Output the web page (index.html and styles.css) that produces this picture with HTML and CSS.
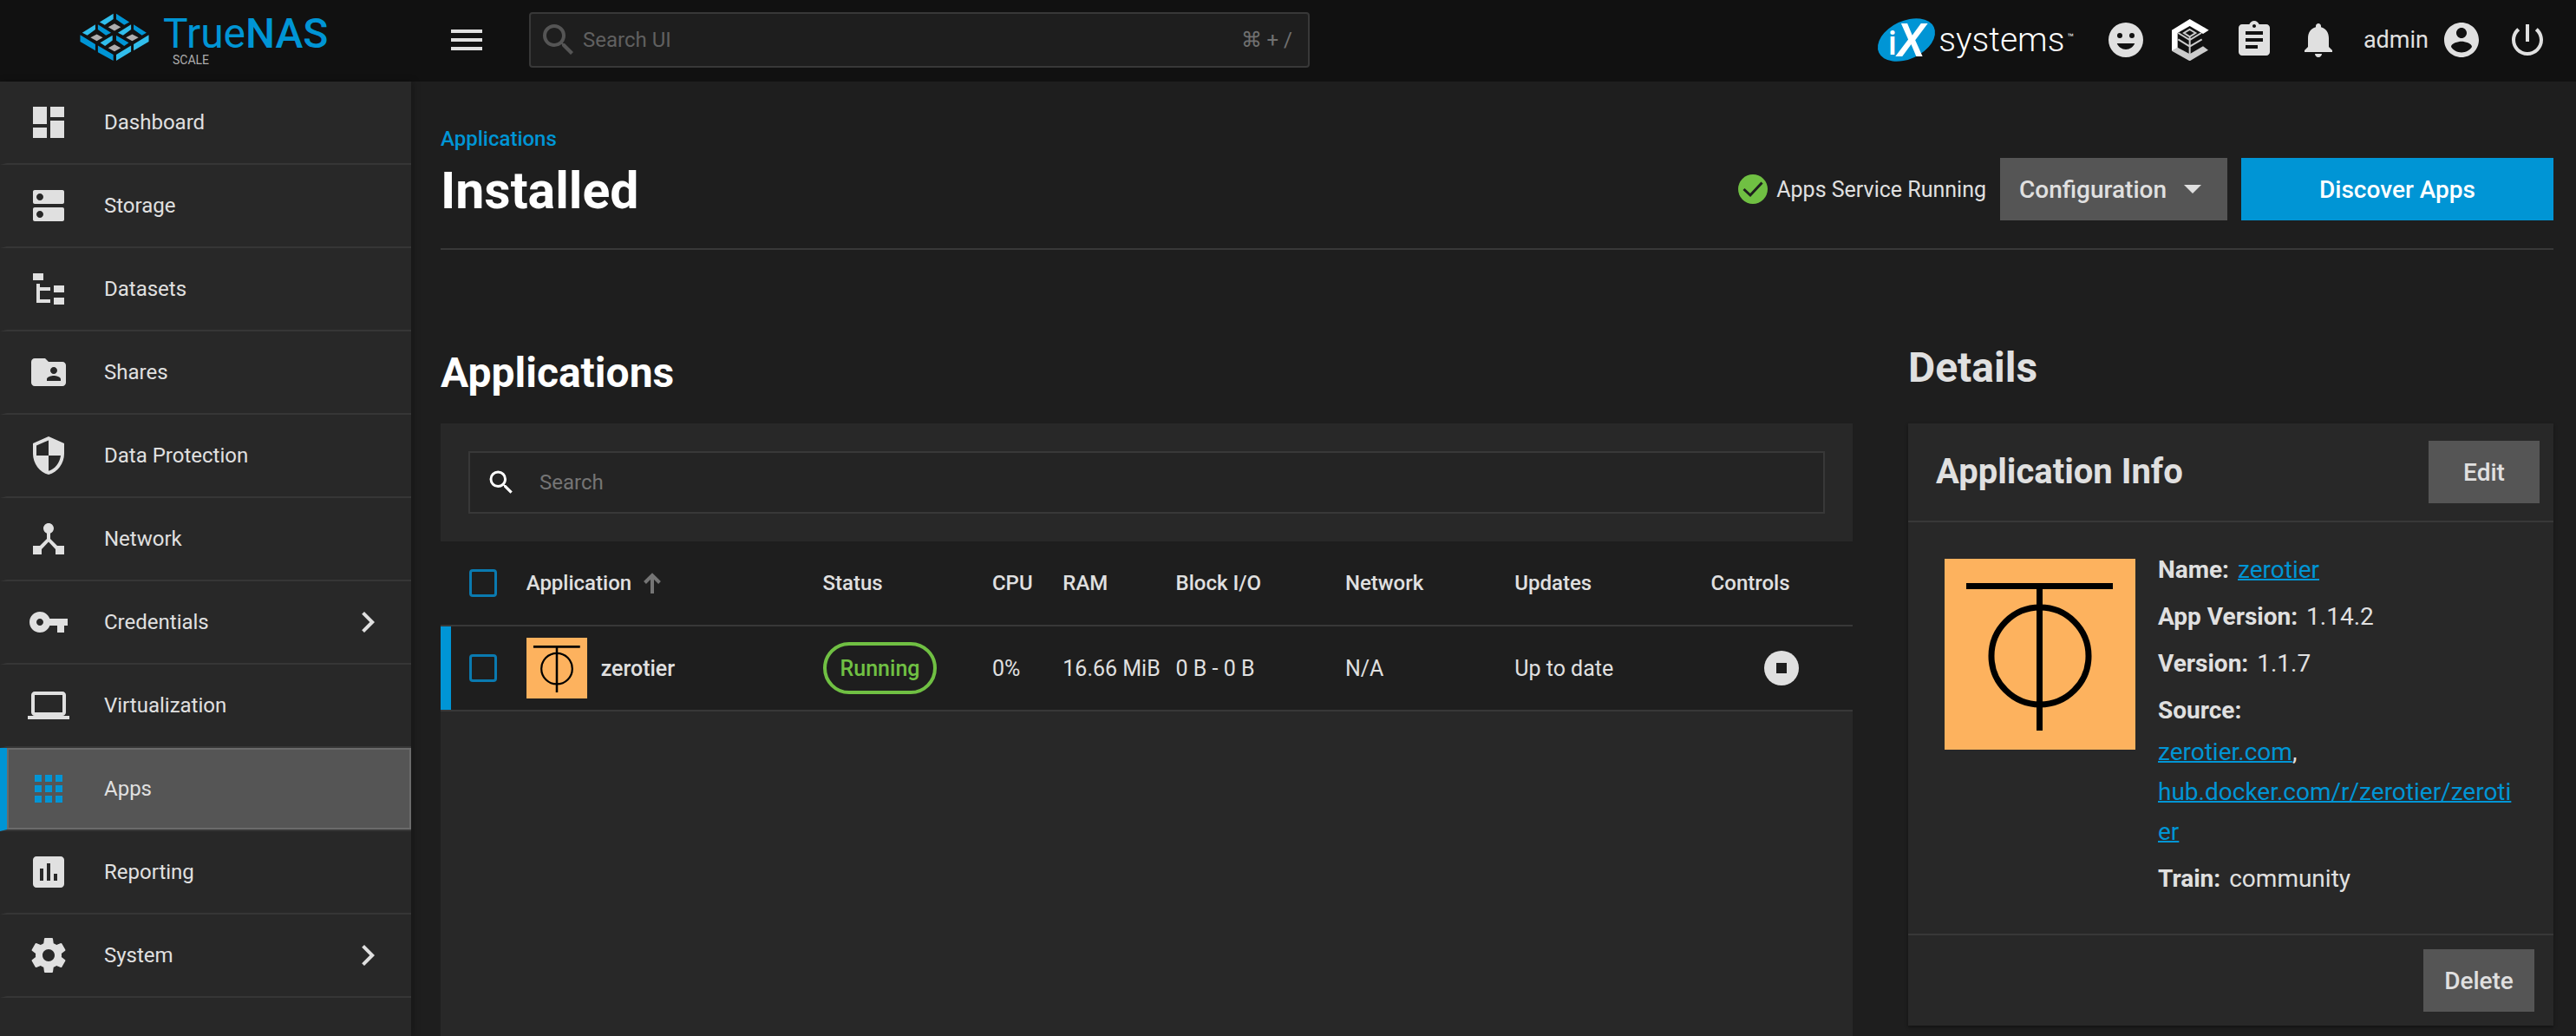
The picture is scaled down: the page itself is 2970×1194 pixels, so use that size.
FILE: index.html
```html
<!DOCTYPE html>
<html lang="en">
<head>
<meta charset="utf-8">
<title>Installed - TrueNAS</title>
<link rel="stylesheet" href="styles.css">
</head>
<body>
<header class="topbar">
  <a class="brand" href="#">
    <svg class="brand-mark" viewBox="36 28 240 170" aria-hidden="true">
      <g fill="#31beec">
        <path d="M104 60L152 30V49L122 70ZM43 97L89 68V86L61 106ZM168 97L214 68V86L186 106ZM106 132L149 106V124L123 143ZM162 174L214 142V163L162 195ZM223 137L276 105V128L223 159Z"/>
      </g>
      <g fill="#0095d5">
        <path d="M162 30L208 60L190 70L162 50ZM98 68L144 97L126 106L98 86ZM223 68L268 97L252 106L223 86ZM162 106L206 132L190 143L162 124ZM36 105L89 137V159L36 128ZM98 142L152 174V195L98 165Z"/>
      </g>
      <g fill="#aeadae">
        <path d="M156 65L178 77L156 90L134 77ZM94 102L115 114L94 126L72 114ZM218 102L240 114L218 126L196 114ZM156 138L178 150L156 162L134 150Z"/>
      </g>
    </svg>
    <span class="brand-text">
      <span class="brand-name">True<b>NAS</b></span>
      <span class="brand-edition">SCALE</span>
    </span>
  </a>
  <div class="topbar-main">
    <button class="icon-btn" type="button" aria-label="Toggle menu">
      <svg class="icon" viewBox="0 0 24 24"><path d="M3 18h18v-2H3v2zm0-5h18v-2H3v2zm0-7v2h18V6H3z"/></svg>
    </button>
    <label class="global-search">
      <svg class="icon" viewBox="0 0 24 24"><path d="M9.5 3A6.5 6.5 0 0 1 16 9.5c0 1.61-.59 3.09-1.56 4.23l.27.27h.79l5 5-1.5 1.5-5-5v-.79l-.27-.27A6.516 6.516 0 0 1 9.5 16 6.5 6.5 0 0 1 3 9.5 6.5 6.5 0 0 1 9.5 3m0 2C7 5 5 7 5 9.5S7 14 9.5 14 14 12 14 9.5 12 5 9.5 5z"/></svg>
      <input type="text" placeholder="Search UI" aria-label="Search UI">
      <kbd>⌘ + /</kbd>
    </label>
    <div class="topbar-actions">
      <a class="vendor" href="#">
        <svg class="vendor-mark" viewBox="0 0 68 50">
          <ellipse cx="34" cy="25" rx="35" ry="22" transform="rotate(-25 34 25)"/>
          <text class="vendor-i" x="13" y="42">i</text>
          <text class="vendor-x" x="23" y="44">X</text>
        </svg>
        <span class="vendor-name">systems</span><span class="vendor-tm">™</span>
      </a>
      <button class="icon-btn" type="button" aria-label="Send feedback">
        <svg class="icon" viewBox="0 0 24 24"><path d="M12 2a10 10 0 1 0 0 20 10 10 0 0 0 0-20zM8.500 8a1.500 1.500 0 1 1 0 3 1.500 1.500 0 0 1 0-3zm7 0a1.500 1.500 0 1 1 0 3 1.500 1.500 0 0 1 0-3zM12 17.500c-2.330 0-4.310-1.460-5.110-3.500h10.220c-.8 2.040-2.780 3.500-5.110 3.500z"/></svg>
      </button>
      <button class="icon-btn" type="button" aria-label="TrueCommand status">
        <svg class="icon" viewBox="1049 50 144 144">
          <path fill="#fff" d="M1058 88L1120 50L1186 88L1166 101L1120 74L1078 98V150L1058 160Z"/>
          <path fill="#ccc" d="M1058 160L1078 148L1120 171L1166 144L1184 157L1120 195Z"/>
          <path fill="none" stroke="#ccc" stroke-width="6" d="M1080 98L1120 122L1160 98M1120 86L1140 98L1120 111L1100 98ZM1080 120L1120 145L1162 120M1120 112V172"/>
        </svg>
      </button>
      <button class="icon-btn" type="button" aria-label="Jobs">
        <svg class="icon" viewBox="0 0 24 24"><path d="M19 3h-4.180C14.400 1.840 13.300 1 12 1c-1.300 0-2.400.84-2.820 2H5c-1.100 0-2 .9-2 2v14c0 1.100.9 2 2 2h14c1.100 0 2-.9 2-2V5c0-1.100-.9-2-2-2zm-7 0c.55 0 1 .45 1 1s-.45 1-1 1-1-.45-1-1 .45-1 1-1zm2 14H7v-2h7v2zm3-4H7v-2h10v2zm0-4H7V7h10v2z"/></svg>
      </button>
      <button class="icon-btn" type="button" aria-label="Alerts">
        <svg class="icon" viewBox="0 0 24 24"><path d="M12 22c1.100 0 2-.9 2-2h-4c0 1.100.89 2 2 2zm6-6v-5c0-3.070-1.640-5.640-4.500-6.320V4c0-.83-.67-1.500-1.500-1.500s-1.500.67-1.500 1.500v.68C7.630 5.360 6 7.920 6 11v5l-2 2v1h16v-1l-2-2z"/></svg>
      </button>
      <button class="user-btn" type="button">
        <span>admin</span>
        <svg class="icon" viewBox="0 0 24 24"><path d="M12 2C6.480 2 2 6.480 2 12s4.480 10 10 10 10-4.480 10-10S17.520 2 12 2zm0 3c1.660 0 3 1.340 3 3s-1.340 3-3 3-3-1.340-3-3 1.340-3 3-3zm0 14.200c-2.500 0-4.710-1.280-6-3.220.03-1.990 4-3.080 6-3.080 1.990 0 5.970 1.090 6 3.080-1.290 1.940-3.500 3.220-6 3.220z"/></svg>
      </button>
      <button class="icon-btn" type="button" aria-label="Power">
        <svg class="icon" viewBox="0 0 24 24"><path d="M13 3h-2v10h2V3zm4.830 2.170l-1.420 1.420C17.990 7.860 19 9.810 19 12c0 3.870-3.130 7-7 7s-7-3.130-7-7c0-2.190 1.010-4.140 2.580-5.420L6.170 5.170C4.230 6.820 3 9.260 3 12c0 4.970 4.030 9 9 9s9-4.030 9-9c0-2.740-1.230-5.180-3.170-6.830z"/></svg>
      </button>
    </div>
  </div>
</header>

<div class="layout">
  <nav class="sidebar" aria-label="Main">
    <ul>
      <li><a href="#"><svg class="icon" viewBox="0 0 24 24"><path d="M13 3v6h8V3m-8 18h8V11h-8M3 21h8v-6H3m0-2h8V3H3z"/></svg><span>Dashboard</span></a></li>
      <li><a href="#"><svg class="icon" viewBox="0 0 24 24"><path d="M20 13H4c-.55 0-1 .45-1 1v6c0 .55.45 1 1 1h16c.55 0 1-.45 1-1v-6c0-.55-.45-1-1-1zM7 19c-1.100 0-2-.9-2-2s.9-2 2-2 2 .9 2 2-.9 2-2 2zM20 3H4c-.55 0-1 .45-1 1v6c0 .55.45 1 1 1h16c.55 0 1-.45 1-1V4c0-.55-.45-1-1-1zM7 9c-1.100 0-2-.9-2-2s.9-2 2-2 2 .9 2 2-.9 2-2 2z"/></svg><span>Storage</span></a></li>
      <li><a href="#"><svg class="icon" viewBox="0 0 24 24"><path d="M3 3h6v4H3V3m12 7h6v4h-6v-4m0 7h6v4h-6v-4m-2-4H7v5h6v2H5V9h2v2h6v2z"/></svg><span>Datasets</span></a></li>
      <li><a href="#"><svg class="icon" viewBox="0 0 24 24"><path d="M20 6h-8l-2-2H4c-1.100 0-1.990.9-1.990 2L2 18c0 1.100.9 2 2 2h16c1.100 0 2-.9 2-2V8c0-1.100-.9-2-2-2zm-5 3c1.100 0 2 .9 2 2s-.9 2-2 2-2-.9-2-2 .9-2 2-2zm4 8h-8v-1c0-1.330 2.670-2 4-2s4 .67 4 2v1z"/></svg><span>Shares</span></a></li>
      <li><a href="#"><svg class="icon" viewBox="0 0 24 24"><path d="M12 1L3 5v6c0 5.550 3.840 10.740 9 12 5.160-1.260 9-6.450 9-12V5l-9-4zm0 10.990h7c-.53 4.120-3.280 7.790-7 8.940V12H5V6.300l7-3.110v8.800z"/></svg><span>Data Protection</span></a></li>
      <li><a href="#"><svg class="icon" viewBox="0 0 24 24"><path d="M17 16l-4-4V8.820C14.160 8.400 15 7.300 15 6c0-1.660-1.340-3-3-3S9 4.340 9 6c0 1.300.84 2.400 2 2.820V12l-4 4H3v5h5v-3.050l4-4.200 4 4.200V21h5v-5h-4z"/></svg><span>Network</span></a></li>
      <li><a href="#"><svg class="icon" viewBox="0 0 24 24"><path d="M12.650 10C11.830 7.670 9.610 6 7 6c-3.310 0-6 2.690-6 6s2.690 6 6 6c2.610 0 4.830-1.670 5.650-4H17v4h4v-4h2v-4H12.650zM7 14c-1.100 0-2-.9-2-2s.9-2 2-2 2 .9 2 2-.9 2-2 2z"/></svg><span>Credentials</span><svg class="icon chevron" viewBox="0 0 24 24"><path d="M10 6L8.590 7.410 13.170 12l-4.580 4.590L10 18l6-6z"/></svg></a></li>
      <li><a href="#"><svg class="icon" viewBox="0 0 24 24"><path d="M20 18c1.100 0 1.990-.9 1.990-2L22 6c0-1.100-.9-2-2-2H4c-1.100 0-2 .9-2 2v10c0 1.100.9 2 2 2H0v2h24v-2h-4zM4 6h16v10H4V6z"/></svg><span>Virtualization</span></a></li>
      <li class="active"><a href="#" aria-current="page"><svg class="icon" viewBox="0 0 24 24"><path d="M4 8h4V4H4v4zm6 12h4v-4h-4v4zm-6 0h4v-4H4v4zm0-6h4v-4H4v4zm6 0h4v-4h-4v4zm6-10v4h4V4h-4zm-6 4h4V4h-4v4zm6 6h4v-4h-4v4zm0 6h4v-4h-4v4z"/></svg><span>Apps</span></a></li>
      <li><a href="#"><svg class="icon" viewBox="0 0 24 24"><path d="M19 3H5c-1.100 0-2 .9-2 2v14c0 1.100.9 2 2 2h14c1.100 0 2-.9 2-2V5c0-1.100-.9-2-2-2zM9 17H7v-7h2v7zm4 0h-2V7h2v10zm4 0h-2v-4h2v4z"/></svg><span>Reporting</span></a></li>
      <li><a href="#"><svg class="icon" viewBox="0 0 24 24"><path d="M19.430 12.980c.04-.32.07-.64.07-.98s-.03-.66-.07-.98l2.110-1.650c.19-.15.24-.42.12-.64l-2-3.460c-.12-.22-.39-.3-.61-.22l-2.490 1c-.52-.4-1.080-.73-1.690-.98l-.38-2.650C14.460 2.180 14.250 2 14 2h-4c-.25 0-.46.18-.49.42l-.38 2.650c-.61.25-1.170.59-1.690.98l-2.490-1c-.23-.09-.49 0-.61.22l-2 3.460c-.13.22-.07.49.12.64l2.110 1.650c-.04.32-.07.65-.07.98s.03.66.07.98l-2.110 1.650c-.19.15-.24.42-.12.64l2 3.460c.12.22.39.3.61.22l2.490-1c.52.4 1.080.73 1.690.98l.38 2.650c.03.24.24.42.49.42h4c.25 0 .46-.18.49-.42l.38-2.650c.61-.25 1.170-.59 1.690-.98l2.490 1c.23.09.49 0 .61-.22l2-3.460c.12-.22.07-.49-.12-.64l-2.110-1.650zM12 15.500c-1.930 0-3.500-1.570-3.500-3.500s1.570-3.500 3.500-3.500 3.500 1.570 3.500 3.500-1.570 3.500-3.500 3.500z"/></svg><span>System</span><svg class="icon chevron" viewBox="0 0 24 24"><path d="M10 6L8.590 7.410 13.170 12l-4.580 4.590L10 18l6-6z"/></svg></a></li>
    </ul>
  </nav>

  <main class="content">
    <div class="page-header">
      <div class="page-title">
        <a class="breadcrumb" href="#">Applications</a>
        <h1>Installed</h1>
      </div>
      <div class="page-actions">
        <div class="service-status">
          <svg class="status-icon" viewBox="0 0 34 34"><circle cx="17" cy="17" r="17" fill="#70c043"/><path d="M6.500 17L14 24L27.500 9.500" fill="none" stroke="#1e1e1e" stroke-width="3"/></svg>
          <span>Apps Service Running</span>
        </div>
        <button class="btn btn-config" type="button">Configuration
          <svg class="caret" viewBox="0 0 20 10"><path d="M0 0h20L10 10z"/></svg>
        </button>
        <button class="btn btn-primary" type="button">Discover Apps</button>
      </div>
    </div>

    <div class="columns">
      <section class="apps">
        <h2>Applications</h2>
        <div class="card apps-card">
          <div class="search-row">
            <label class="app-search">
              <svg class="icon" viewBox="0 0 24 24"><path d="M9.500 3A6.500 6.500 0 0 1 16 9.500c0 1.610-.59 3.090-1.560 4.230l.27.27h.79l5 5-1.500 1.500-5-5v-.79l-.27-.27A6.516 6.516 0 0 1 9.500 16 6.500 6.500 0 0 1 3 9.500 6.500 6.500 0 0 1 9.500 3m0 2C7 5 5 7 5 9.500S7 14 9.500 14 14 12 14 9.500 12 5 9.500 5z"/></svg>
              <input type="text" placeholder="Search" aria-label="Search applications">
            </label>
          </div>
          <table class="app-table">
            <colgroup>
              <col class="col-check"><col class="col-app"><col class="col-wide"><col class="col-cpu"><col class="col-ram">
              <col class="col-wide"><col class="col-wide"><col class="col-wide"><col class="col-wide">
            </colgroup>
            <thead>
              <tr>
                <th class="cell-check"><input type="checkbox" aria-label="Select all"></th>
                <th><span class="sort">Application <svg class="sort-icon" viewBox="0 0 20 24"><path d="M10 24V3M1.500 11.500L10 3L18.500 11.500" fill="none" stroke="#757575" stroke-width="4"/></svg></span></th>
                <th>Status</th>
                <th>CPU</th>
                <th>RAM</th>
                <th>Block I/O</th>
                <th>Network</th>
                <th>Updates</th>
                <th class="cell-controls">Controls</th>
              </tr>
            </thead>
            <tbody>
              <tr class="selected">
                <td class="cell-check"><input type="checkbox" aria-label="Select zerotier"></td>
                <td><span class="app-name">
                  <svg class="app-logo" viewBox="0 0 220 220"><rect width="220" height="220" fill="#fdb25e"/><path d="M25 28h169v9H25zM106 28h8v170h-8z"/><circle cx="110" cy="112" r="56" fill="none" stroke="#000" stroke-width="7"/></svg>
                  zerotier</span></td>
                <td><span class="pill">Running</span></td>
                <td>0%</td>
                <td>16.66 MiB</td>
                <td>0 B - 0 B</td>
                <td>N/A</td>
                <td>Up to date</td>
                <td class="cell-controls"><button class="stop-btn" type="button" aria-label="Stop"><svg viewBox="0 0 40 40"><circle cx="20" cy="20" r="20" fill="#e0e0e0"/><path d="M14 14h12v12H14z" fill="#1e1e1e"/></svg></button></td>
              </tr>
            </tbody>
          </table>
        </div>
      </section>

      <aside class="details">
        <h2>Details</h2>
        <div class="card details-card">
          <div class="card-header">
            <h3>Application Info</h3>
            <button class="btn btn-small" type="button">Edit</button>
          </div>
          <div class="card-body">
            <svg class="details-logo" viewBox="0 0 220 220"><rect width="220" height="220" fill="#fdb25e"/><path d="M25 28h169v7H25zM106 28h7v170h-7z"/><circle cx="110" cy="112" r="56" fill="none" stroke="#000" stroke-width="7"/></svg>
            <dl class="info">
              <div><dt>Name:</dt><dd><a href="#">zerotier</a></dd></div>
              <div><dt>App Version:</dt><dd>1.14.2</dd></div>
              <div><dt>Version:</dt><dd>1.1.7</dd></div>
              <div class="stacked"><dt>Source:</dt><dd><a href="#">zerotier.com</a>,</dd><dd><a href="#">hub.docker.com/r/zerotier/zerotier</a></dd></div>
              <div><dt>Train:</dt><dd>community</dd></div>
            </dl>
          </div>
          <div class="card-footer">
            <button class="btn btn-small" type="button">Delete</button>
          </div>
        </div>
      </aside>
    </div>
  </main>
</div>
</body>
</html>
```
FILE: styles.css
```css
:root {
  --bg: #1e1e1e;
  --card: #282828;
  --topbar: #111;
  --line: #383838;
  --fg: #e0e0e0;
  --muted: #757575;
  --primary: #0095d5;
  --green: #70c043;
  --btn: #555;
}

* { box-sizing: border-box; }

body {
  margin: 0;
  min-height: 100vh;
  display: flex;
  flex-direction: column;
  background: var(--bg);
  color: var(--fg);
  font-family: Roboto, "Liberation Sans", sans-serif;
  font-size: 24px;
}

h1, h2, h3, ul, dl, dd { margin: 0; padding: 0; }
ul { list-style: none; }
a { color: var(--primary); }
button, input, kbd { font: inherit; color: inherit; }
button { border: 0; padding: 0; background: none; cursor: pointer; }

.icon { width: 48px; height: 48px; flex: none; fill: currentColor; display: block; }

/* Top bar */
.topbar {
  display: grid;
  grid-template-columns: 474px minmax(0, 1fr);
  height: 94px;
  background: var(--topbar);
}
.brand {
  display: flex;
  gap: 16px;
  padding: 15px 0 0 92px;
  text-decoration: none;
}
.brand-mark { width: 80px; height: 56px; }
.brand-text { display: flex; flex-direction: column; }
.brand-name { font-size: 48px; line-height: 48px; }
.brand-name b { font-weight: 500; }
.brand-edition { padding-left: 11px; font-size: 14px; line-height: 12px; color: #aeadae; }

.topbar-main { display: flex; align-items: center; padding: 0 32px 2px 40px; }
.global-search {
  display: flex;
  align-items: center;
  width: 900px;
  height: 64px;
  margin-left: 48px;
  padding: 0 18px 0 8px;
  border: 2px solid var(--line);
  border-radius: 4px;
  background: var(--bg);
  color: #555;
}
.global-search input, .app-search input {
  flex: 1;
  min-width: 0;
  border: 0;
  padding: 0;
  background: none;
  outline: 0;
}
.global-search input { padding-left: 4px; }
.global-search input::placeholder { color: #606060; opacity: 1; }
.global-search kbd { color: #707070; }

.topbar-actions { display: flex; align-items: center; gap: 26px; margin-left: auto; }
.vendor { display: flex; align-items: center; gap: 3px; margin-right: 10px; color: #fff; text-decoration: none; }
.vendor-mark { width: 68px; height: 50px; fill: var(--primary); overflow: visible; }
.vendor-mark text { fill: #fff; font-weight: 500; }
.vendor-i { font-size: 38px; }
.vendor-x { font-size: 54px; font-style: italic; }
.vendor-name { font-size: 39px; line-height: 50px; font-weight: 300; }
.vendor-tm { align-self: flex-start; font-size: 12px; line-height: 44px; }
.user-btn { display: flex; align-items: center; gap: 14px; margin: 0 2px; font-size: 27px; }

/* Sidebar */
.layout { flex: 1; display: grid; grid-template-columns: 474px minmax(0, 1fr); }
.sidebar { background: var(--card); box-shadow: 2px 0 8px rgba(0, 0, 0, .3); }
.sidebar li { border-left: 8px solid transparent; border-bottom: 2px solid #363636; }
.sidebar a {
  display: flex;
  align-items: center;
  gap: 40px;
  height: 94px;
  padding: 0 26px 0 24px;
  color: var(--fg);
  text-decoration: none;
}
.sidebar .chevron { margin-left: auto; }
.sidebar .active { border-left-color: var(--primary); }
.sidebar .active a { background: var(--btn); box-shadow: inset 0 0 0 2px #6b6b6b; }
.sidebar .active .icon { color: var(--primary); }

/* Page */
.content { display: flex; flex-direction: column; padding: 0 26px 0 34px; }
.page-header {
  display: flex;
  justify-content: space-between;
  align-items: flex-end;
  padding: 50px 0 32px;
  border-bottom: 2px solid var(--line);
}
.page-title { display: flex; flex-direction: column; gap: 10px; }
.breadcrumb { line-height: 32px; font-weight: 500; text-decoration: none; }
h1 { font-size: 59px; line-height: 68px; color: #fff; }
.page-actions { display: flex; align-items: center; gap: 16px; }
.service-status { display: flex; align-items: center; gap: 10px; font-size: 25px; }
.status-icon { width: 34px; height: 34px; }

.btn {
  display: flex;
  align-items: center;
  justify-content: center;
  height: 72px;
  background: var(--btn);
  font-size: 28px;
  font-weight: 500;
}
.btn-config { width: 262px; gap: 20px; justify-content: flex-start; padding-left: 22px; }
.btn-primary { width: 360px; background: var(--primary); color: #fff; }
.btn-small { width: 128px; }
.caret { width: 20px; height: 10px; fill: currentColor; }

.columns {
  flex: 1;
  display: grid;
  grid-template-columns: minmax(0, 1fr) 744px;
  gap: 64px;
  padding-top: 108px;
}
h2 { font-size: 48px; line-height: 56px; }
.card { background: var(--card); }

/* Applications */
.apps { display: flex; flex-direction: column; padding-top: 6px; }
.apps h2 { color: #fff; margin-bottom: 30px; }
.apps-card { flex: 1; }
.search-row { padding: 32px; }
.app-search {
  display: flex;
  align-items: center;
  gap: 26px;
  height: 72px;
  padding: 0 18px;
  border: 2px solid var(--line);
  background: #242424;
}
.app-search .icon { width: 36px; height: 36px; color: #fff; }
.app-search input::placeholder { color: var(--muted); opacity: 1; }

.app-table { width: 100%; table-layout: fixed; border-spacing: 0; background: var(--bg); }
.col-check { width: 6%; }
.col-app { width: 21%; }
.col-wide { width: 12%; }
.col-cpu { width: 5%; }
.col-ram { width: 8%; }
.app-table th, .app-table td {
  height: 98px;
  padding: 0 0 0 1px;
  border-bottom: 2px solid var(--line);
  text-align: left;
  vertical-align: middle;
  white-space: nowrap;
}
.app-table th { font-weight: 500; }
.app-table td { font-size: 25px; }
.app-table .cell-check { padding-left: 33px; }
.app-table th.cell-controls { padding-left: 32px; }
.app-table td.cell-controls { padding-left: 93px; }
.selected .cell-check { box-shadow: inset 12px 0 var(--primary); }
.app-table input {
  appearance: none;
  display: block;
  width: 32px;
  height: 32px;
  margin: 0;
  border: 3px solid #0a7ab0;
  border-radius: 4px;
}
.sort { display: flex; align-items: center; gap: 14px; }
.sort-icon { width: 20px; height: 24px; }
.app-name { display: flex; align-items: center; gap: 16px; font-weight: 500; }
.app-logo { width: 70px; height: 70px; }
.pill {
  display: flex;
  align-items: center;
  width: max-content;
  height: 60px;
  padding: 0 16px;
  border: 4px solid var(--green);
  border-radius: 30px;
  color: var(--green);
  font-weight: 500;
}
.stop-btn { display: block; width: 40px; height: 40px; }

/* Details */
.details { padding-bottom: 12px; }
.details h2 { margin-bottom: 36px; }
.details-card { box-shadow: 0 2px 4px rgba(0, 0, 0, .4); }
.card-header {
  display: flex;
  align-items: center;
  justify-content: space-between;
  padding: 20px 16px 20px 32px;
  border-bottom: 2px solid var(--line);
}
h3 { font-size: 40px; line-height: 48px; }
.card-body { display: flex; gap: 26px; padding: 32px 42px; }
.details-logo { flex: none; width: 220px; height: 220px; margin-top: 10px; }
.info { flex: 1; min-width: 0; font-size: 28px; line-height: 46px; }
.info > div { display: flex; gap: 10px; margin-bottom: 8px; }
.info > .stacked { display: block; }
.info dt { font-weight: 700; }
.stacked dt { margin-bottom: 2px; }
.info dd { overflow-wrap: anywhere; }
.info a { text-decoration-thickness: 2px; }
.card-footer { display: flex; justify-content: flex-end; padding: 16px 22px; border-top: 2px solid var(--line); }
```
